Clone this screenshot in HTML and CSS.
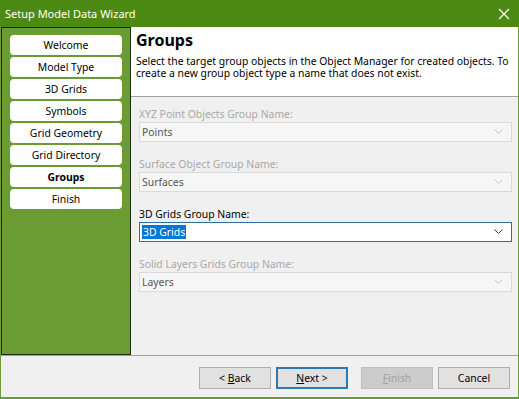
FILE: index.html
```html
<!DOCTYPE html>
<html lang="en">
<head>
  <meta charset="UTF-8" />
  <title>Setup Model Data Wizard</title>
  <link rel="stylesheet" href="styles.css">
</head>
<body>
  <div class="window">
    <div class="titlebar">
      <span class="title">Setup Model Data Wizard</span>
      <svg class="close" width="12" height="12" viewBox="0 0 12 12">
        <path d="M1 1 L11 11 M11 1 L1 11" stroke="#fff" stroke-width="1.2" fill="none"/>
      </svg>
    </div>

    <div class="frame">
      <div class="main">
        <nav class="steps">
          <div class="step">Welcome</div>
          <div class="step">Model Type</div>
          <div class="step">3D Grids</div>
          <div class="step">Symbols</div>
          <div class="step">Grid Geometry</div>
          <div class="step">Grid Directory</div>
          <div class="step current">Groups</div>
          <div class="step">Finish</div>
        </nav>

        <section class="page">
          <header class="page-head">
            <h1>Groups</h1>
            <p>Select the target group objects in the Object Manager for created objects. To create a new group object type a name that does not exist.</p>
          </header>

          <div class="fields">
            <div class="field disabled">
              <label>XYZ Point Objects Group Name:</label>
              <div class="combo"><span>Points</span><svg class="chev" width="9" height="6" viewBox="0 0 9 6"><path d="M0.5 0.5 L4.5 4.5 L8.5 0.5" fill="none" stroke="currentColor"/></svg></div>
            </div>
            <div class="field disabled">
              <label>Surface Object Group Name:</label>
              <div class="combo"><span>Surfaces</span><svg class="chev" width="9" height="6" viewBox="0 0 9 6"><path d="M0.5 0.5 L4.5 4.5 L8.5 0.5" fill="none" stroke="currentColor"/></svg></div>
            </div>
            <div class="field">
              <label>3D Grids Group Name:</label>
              <div class="combo focus"><span class="sel">3D Grids</span><svg class="chev" width="9" height="6" viewBox="0 0 9 6"><path d="M0.5 0.5 L4.5 4.5 L8.5 0.5" fill="none" stroke="currentColor"/></svg></div>
            </div>
            <div class="field disabled">
              <label>Solid Layers Grids Group Name:</label>
              <div class="combo"><span>Layers</span><svg class="chev" width="9" height="6" viewBox="0 0 9 6"><path d="M0.5 0.5 L4.5 4.5 L8.5 0.5" fill="none" stroke="currentColor"/></svg></div>
            </div>
          </div>
        </section>
      </div>

      <footer class="buttons">
        <button>&lt; <u>B</u>ack</button>
        <button class="default"><u>N</u>ext &gt;</button>
        <button class="gap" disabled><u>F</u>inish</button>
        <button>Cancel</button>
      </footer>
    </div>
  </div>
</body>
</html>
```

FILE: styles.css
```css
body {
  margin: 0;
  font-family: "Noto Sans", "Open Sans", sans-serif;
  font-size: 10.4px;
  color: #000;
}
.window {
  width: 519px;
  height: 399px;
  display: flex;
  flex-direction: column;
  background: #f0f0f0;
}
.titlebar {
  height: 27px;
  background: #4d8a13;
  color: #fff;
  display: flex;
  align-items: center;
  justify-content: space-between;
  padding: 0 9px 0 5px;
}
.title {
  font-size: 11px;
}
.frame {
  flex: 1;
  display: flex;
  flex-direction: column;
  border: 1px solid #6b9c33;
  border-top: none;
  border-bottom-width: 2px;
}
.main {
  display: flex;
  height: 328px;
}
.steps {
  box-sizing: border-box;
  width: 130px;
  background: #6b9c33;
  border: 1px solid #1e2a12;
  padding: 7px 0 0 8px;
  display: flex;
  flex-direction: column;
  gap: 2px;
}
.step {
  width: 112px;
  height: 20px;
  line-height: 20px;
  background: #fff;
  border-radius: 4px;
  text-align: center;
}
.step.current {
  font-weight: bold;
}
.page {
  flex: 1;
  display: flex;
  flex-direction: column;
}
.page-head {
  background: #fff;
  height: 67px;
  border-bottom: 1px solid #a0a0a0;
  padding: 2px 6px 0 5px;
}
.page-head h1 {
  margin: 0;
  font-size: 16px;
  line-height: 22px;
}
.page-head p {
  margin: 4px 0 0;
  line-height: 12px;
}
.fields {
  padding: 10px 6px 0 8px;
  display: flex;
  flex-direction: column;
  gap: 15px;
}
.field label {
  display: block;
  height: 15px;
  line-height: 15px;
}
.field.disabled label {
  color: #a8a8a8;
}
.combo {
  height: 20px;
  box-sizing: border-box;
  border: 1px solid #dadada;
  background: #f6f6f6;
  display: flex;
  align-items: center;
  justify-content: space-between;
  padding: 0 8px 0 2px;
  color: #555;
}
.combo .chev {
  color: #c4c4c4;
}
.combo.focus {
  background: #fff;
  border-color: #2f6f9f;
  color: #000;
}
.combo.focus .chev {
  color: #333;
}
.sel {
  background: #0078d7;
  color: #fff;
  padding: 0 1px;
}
.buttons {
  flex: 1;
  border-top: 1px solid #a0a0a0;
  display: flex;
  justify-content: flex-end;
  align-items: flex-start;
  padding: 11px 8px 0 0;
  gap: 5px;
}
.buttons button {
  width: 72px;
  height: 22px;
  font: inherit;
  background: #e1e1e1;
  border: 1px solid #adadad;
  padding: 0;
  color: #000;
}
.buttons button.default {
  border: 2px solid #2a78b4;
}
.buttons button:disabled {
  background: #cccccc;
  border-color: #bfbfbf;
  color: #a0a0a0;
}
.buttons .gap {
  margin-left: 8px;
}
```
